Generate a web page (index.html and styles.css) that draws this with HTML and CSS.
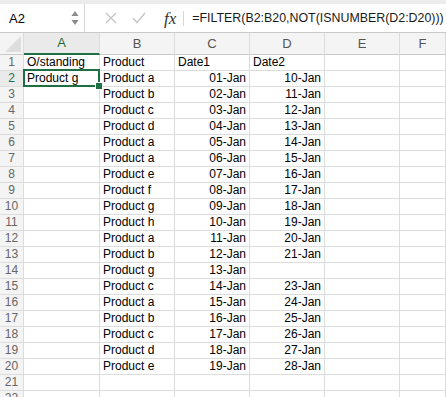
FILE: index.html
```html
<!DOCTYPE html>
<html lang="en">
<head>
    <meta charset="UTF-8">
    <title>Sheet</title>
    <link rel="stylesheet" href="styles.css">
</head>
<body>
    <!-- formula bar -->
    <div class="formula-bar">
        <div class="name-box">
            <span class="cell-ref">A2</span>
            <svg class="stepper" width="8" height="16" viewBox="0 0 8 16">
                <path d="M4 1 L7.5 6 L0.5 6 Z" fill="#8a8a8a"/>
                <path d="M4 15 L7.5 10 L0.5 10 Z" fill="#8a8a8a"/>
            </svg>
        </div>
        <div class="bar-icons">
            <svg width="12" height="12" viewBox="0 0 12 12">
                <path d="M1 1 L11 11 M11 1 L1 11" stroke="#c4c4c4" stroke-width="1.4" fill="none"/>
            </svg>
            <svg width="14" height="12" viewBox="0 0 14 12">
                <path d="M1 6 L5 10.5 L13 1" stroke="#c4c4c4" stroke-width="1.4" fill="none"/>
            </svg>
            <span class="fx">fx</span>
        </div>
        <div class="formula">=FILTER(B2:B20,NOT(ISNUMBER(D2:D20)))</div>
    </div>

    <!-- grid -->
    <div class="sheet" id="sheet">
        <div class="corner"><span class="tri"></span></div>
        <div class="col-head active">A</div>
        <div class="col-head">B</div>
        <div class="col-head">C</div>
        <div class="col-head">D</div>
        <div class="col-head">E</div>
        <div class="col-head">F</div>
    </div>

    <script>
        const rows = [
            ['O/standing', 'Product', 'Date1', 'Date2'],
            ['Product g', 'Product a', '01-Jan', '10-Jan'],
            ['', 'Product b', '02-Jan', '11-Jan'],
            ['', 'Product c', '03-Jan', '12-Jan'],
            ['', 'Product d', '04-Jan', '13-Jan'],
            ['', 'Product a', '05-Jan', '14-Jan'],
            ['', 'Product a', '06-Jan', '15-Jan'],
            ['', 'Product e', '07-Jan', '16-Jan'],
            ['', 'Product f', '08-Jan', '17-Jan'],
            ['', 'Product g', '09-Jan', '18-Jan'],
            ['', 'Product h', '10-Jan', '19-Jan'],
            ['', 'Product a', '11-Jan', '20-Jan'],
            ['', 'Product b', '12-Jan', '21-Jan'],
            ['', 'Product g', '13-Jan', ''],
            ['', 'Product c', '14-Jan', '23-Jan'],
            ['', 'Product a', '15-Jan', '24-Jan'],
            ['', 'Product b', '16-Jan', '25-Jan'],
            ['', 'Product c', '17-Jan', '26-Jan'],
            ['', 'Product d', '18-Jan', '27-Jan'],
            ['', 'Product e', '19-Jan', '28-Jan'],
            ['', '', '', ''],
            ['', '', '', '']
        ];

        const sheet = document.getElementById('sheet');
        const html = [];
        rows.forEach((r, i) => {
            const n = i + 1;
            html.push(`<div class="row-head${n === 2 ? ' active' : ''}">${n}</div>`);
            r.forEach((v, c) => {
                let cls = 'cell';
                if (n > 1 && c >= 2) cls += ' num';
                if (n === 2 && c === 0) cls += ' selected';
                html.push(`<div class="${cls}">${v}</div>`);
            });
            html.push('<div class="cell"></div><div class="cell"></div>');
        });
        sheet.insertAdjacentHTML('beforeend', html.join(''));
    </script>
</body>
</html>
```

FILE: styles.css
```css
* {
    box-sizing: border-box;
}

body {
    margin: 0;
    width: 446px;
    height: 397px;
    overflow: hidden;
    background: #fff;
    font-family: "Liberation Sans", Arial, sans-serif;
    color: #000;
}

.formula-bar {
    display: flex;
    align-items: center;
    height: 33px;
    border-top: 4px solid #ececec;
    border-bottom: 1px solid #c9c9c9;
}

.name-box {
    display: flex;
    align-items: center;
    justify-content: space-between;
    width: 85px;
    height: 100%;
    padding: 0 5px 0 9px;
    border-right: 1px solid #d6d6d6;
    font-size: 13px;
}

.bar-icons {
    display: flex;
    align-items: center;
    gap: 15px;
    padding-left: 20px;
    height: 100%;
}

.fx {
    font-family: "Liberation Serif", serif;
    font-style: italic;
    font-size: 17px;
    color: #333;
    margin-left: 3px;
    padding-right: 7px;
    border-right: 1px solid #d6d6d6;
    line-height: 15px;
}

.formula {
    padding-left: 8px;
    font-size: 12.4px;
    color: #1a1a1a;
    white-space: nowrap;
}

.sheet {
    display: grid;
    grid-template-columns: 24px 76px 75px 75px 75px 75px 1fr;
    grid-template-rows: 22px;
    grid-auto-rows: 16px;
}

.corner,
.col-head,
.row-head,
.cell {
    border-right: 1px solid #dcdcdc;
    border-bottom: 1px solid #dcdcdc;
    white-space: nowrap;
    overflow: hidden;
}

.corner {
    background: #f4f4f4;
    display: flex;
    align-items: flex-end;
    justify-content: flex-end;
    padding: 0 2px 2px 0;
    border-bottom-color: #c9c9c9;
}

.tri {
    width: 0;
    height: 0;
    border-left: 16px solid transparent;
    border-bottom: 16px solid #dedede;
}

.col-head {
    background: #f4f4f4;
    color: #555;
    font-size: 13px;
    text-align: center;
    line-height: 21px;
    border-bottom-color: #c9c9c9;
}

.col-head.active {
    color: #1d7043;
    background: #eaeaea;
    border-bottom: 2px solid #1d7043;
    line-height: 20px;
}

.row-head {
    background: #f4f4f4;
    color: #666;
    font-size: 12px;
    text-align: center;
    line-height: 15px;
}

.row-head.active {
    color: #1d7043;
    background: #eaeaea;
}

.cell {
    font-size: 12px;
    line-height: 15px;
    padding: 0 3px;
    overflow: visible;
}

.cell.num {
    text-align: right;
}

.selected {
    position: relative;
}

.selected::before {
    content: "";
    position: absolute;
    left: -1px;
    top: -2px;
    right: -1px;
    bottom: -1px;
    border: 2px solid #1d7043;
}

.selected::after {
    content: "";
    position: absolute;
    right: -4px;
    bottom: -4px;
    width: 6px;
    height: 6px;
    background: #1d7043;
    border: 1px solid #fff;
}
```
